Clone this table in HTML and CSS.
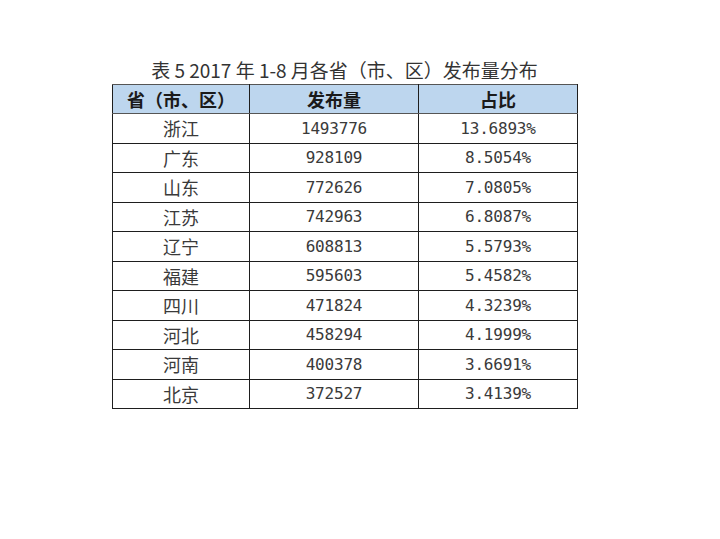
FILE: index.html
```html
<!DOCTYPE html>
<html lang="zh">
<head>
<meta charset="utf-8">
<link rel="stylesheet" href="styles.css">
</head>
<body>
<div class="wrap">
  <div class="title">表 5 2017 年 1-8 月各省（市、区）发布量分布</div>
  <table class="grid">
    <colgroup><col class="c1"><col class="c2"><col class="c3"></colgroup>
    <thead>
      <tr><th>省（市、区）</th><th>发布量</th><th>占比</th></tr>
    </thead>
    <tbody>
      <tr><td class="zh">浙江</td><td class="num">1493776</td><td class="num">13.6893%</td></tr>
      <tr><td class="zh">广东</td><td class="num">928109</td><td class="num">8.5054%</td></tr>
      <tr><td class="zh">山东</td><td class="num">772626</td><td class="num">7.0805%</td></tr>
      <tr><td class="zh">江苏</td><td class="num">742963</td><td class="num">6.8087%</td></tr>
      <tr><td class="zh">辽宁</td><td class="num">608813</td><td class="num">5.5793%</td></tr>
      <tr><td class="zh">福建</td><td class="num">595603</td><td class="num">5.4582%</td></tr>
      <tr><td class="zh">四川</td><td class="num">471824</td><td class="num">4.3239%</td></tr>
      <tr><td class="zh">河北</td><td class="num">458294</td><td class="num">4.1999%</td></tr>
      <tr><td class="zh">河南</td><td class="num">400378</td><td class="num">3.6691%</td></tr>
      <tr><td class="zh">北京</td><td class="num">372527</td><td class="num">3.4139%</td></tr>
    </tbody>
  </table>
</div>
</body>
</html>
```
FILE: styles.css
```css
html, body {
  margin: 0;
  padding: 0;
  background: #ffffff;
}
.wrap {
  width: 465px;
  margin-left: 112px;
  padding-top: 56px;
}
.title {
  height: 28px;
  line-height: 28px;
  text-align: center;
  font-family: "Noto Sans CJK SC", sans-serif;
  font-size: 19px;
  color: #333333;
  white-space: nowrap;
}
.grid {
  width: 465px;
  border-collapse: collapse;
  table-layout: fixed;
}
.c1 { width: 137px; }
.c2 { width: 169px; }
.c3 { width: 159px; }
.grid th, .grid td {
  border: 1px solid #1e1e1e;
  padding: 0;
  text-align: center;
  vertical-align: middle;
}
.grid th {
  height: 28px;
  background: #bdd6ee;
  font-family: "Noto Sans CJK SC", sans-serif;
  font-size: 18px;
  font-weight: 700;
  color: #1a1a1a;
  border-top-color: #555555;
  border-bottom-color: #555555;
}
.grid td {
  height: 28.5px;
  color: #3a3a3a;
}
.zh {
  font-family: "Noto Sans CJK SC", sans-serif;
  font-size: 18px;
}
.num {
  font-family: "DejaVu Sans Mono", monospace;
  font-size: 16px;
  letter-spacing: -0.2px;
}
```
